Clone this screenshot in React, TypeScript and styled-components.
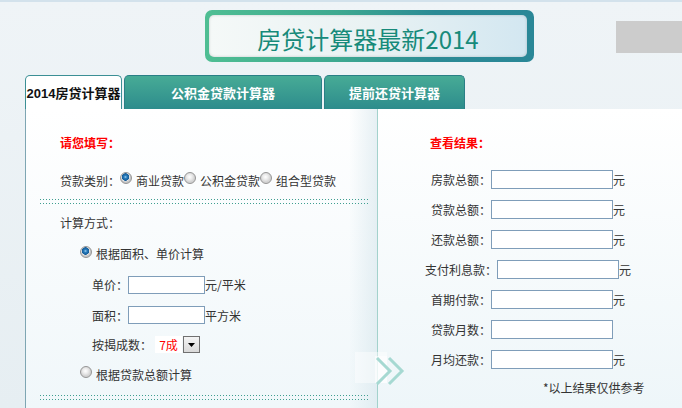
import React from "react";
import styled, { createGlobalStyle, css } from "styled-components";

const GlobalStyle = createGlobalStyle`
  html, body { margin: 0; padding: 0; }
  body {
    background: #e9f0f4;
    font-family: "Noto Sans CJK SC", "Liberation Sans", sans-serif;
  }
`;

const Page = styled.div`
  width: 682px;
  height: 408px;
  overflow: hidden;
  position: relative;
  box-sizing: border-box;
  border-top: 2px solid #d3e2ec;
  background: linear-gradient(to bottom, #eff4f7 0%, #e6eef2 100%);
`;

const Header = styled.header`
  display: flex;
  align-items: flex-start;
  height: 73px;
  box-sizing: border-box;
  padding: 8px 0 0 205px;
`;

const Banner = styled.div`
  width: 329px;
  height: 52px;
  box-sizing: border-box;
  padding: 5px 7px 5px 4px;
  border-radius: 7px;
  background: linear-gradient(to right, #4fbe93 0%, #3ea990 40%, #2b8a95 70%, #2a8797 100%);
`;

const BannerInner = styled.div`
  height: 100%;
  box-sizing: border-box;
  border-radius: 5px;
  background: linear-gradient(to right, #f5f9f8 0%, #e9f2f3 50%, #d3e7f1 100%);
  box-shadow: inset 0 0 3px rgba(0, 0, 0, 0.18);
  display: flex;
  align-items: center;
  justify-content: center;
  padding-top: 4px;
  font-size: 24px;
  color: #178a7a;
`;

const GreyBlock = styled.div`
  margin-left: auto;
  margin-top: 11px;
  width: 66px;
  height: 32px;
  background: #cccccc;
`;

const TabBar = styled.nav`
  display: flex;
  gap: 2px;
  padding-left: 25px;
  height: 34px;
`;

const Tab = styled.div<{ $active?: boolean; $w: number }>`
  width: ${(p) => p.$w}px;
  height: 34px;
  box-sizing: border-box;
  border-radius: 5px 5px 0 0;
  display: flex;
  align-items: center;
  justify-content: center;
  font: bold 13px "Liberation Sans", "Noto Sans CJK SC", sans-serif;
  white-space: nowrap;
  ${(p) =>
    p.$active
      ? css`
          background: #ffffff;
          color: #111;
          border: 1px solid #3b8f95;
          border-bottom: none;
        `
      : css`
          background: linear-gradient(to bottom, #47ab96 0%, #2d8c8c 100%);
          color: #ffffff;
          border: 1px solid #2a7f86;
          border-bottom: none;
        `}
`;

const Panel = styled.main`
  position: relative;
  display: flex;
  margin-left: 25px;
  height: 299px;
  border-left: 1px solid #7ea6b3;
`;

const LeftPane = styled.section`
  width: 351px;
  box-sizing: border-box;
  padding: 24px 7px 0 14px;
  background:
    linear-gradient(to right, rgba(255, 255, 255, 0) 92%, rgba(214, 230, 236, 0.6) 100%),
    linear-gradient(to bottom, #ffffff 0%, #f0f7fa 100%);
  font-size: 12px;
  color: #333;
`;

const VLine = styled.div`
  width: 1px;
  background: #a3d2cc;
`;

const RightPane = styled.section`
  flex: 1;
  box-sizing: border-box;
  padding-top: 24px;
  background: linear-gradient(to bottom, #ffffff 0%, #eef6f9 100%);
  font-size: 12px;
  color: #333;
`;

const RightContent = styled.div`
  width: 300px;
  display: flex;
  flex-direction: column;
`;

const Heading = styled.h3<{ $indent: number }>`
  margin: 0;
  padding-left: ${(p) => p.$indent}px;
  height: 20px;
  line-height: 20px;
  font-size: 12px;
  font-weight: bold;
  color: #ff0000;
`;

const Row = styled.div<{ $indent?: number; $h?: number; $mt?: number }>`
  display: flex;
  align-items: center;
  height: ${(p) => p.$h ?? 30}px;
  margin-top: ${(p) => p.$mt ?? 0}px;
  padding-left: ${(p) => p.$indent ?? 0}px;
  white-space: nowrap;
`;

const Dotted = styled.div<{ $mt: number }>`
  margin-top: ${(p) => p.$mt}px;
  height: 5px;
  background-image:
    repeating-linear-gradient(to right, #3f9e90 0 1px, transparent 1px 3px),
    repeating-linear-gradient(to right, #3f9e90 0 1px, transparent 1px 3px);
  background-size: 100% 1px, 100% 1px;
  background-position: 0 0, 0 4px;
  background-repeat: no-repeat;
`;

const Radio = styled.span<{ $checked?: boolean }>`
  display: inline-block;
  width: 12px;
  height: 12px;
  box-sizing: border-box;
  border-radius: 50%;
  border: 1px solid #959595;
  margin-right: 4px;
  margin-top: -4px;
  flex: none;
  background: ${(p) =>
    p.$checked
      ? "radial-gradient(circle at 45% 40%, #9fd3f2 0, #2a7cbc 1.5px, #135c99 3.5px, #e4e4e4 4px, #c6c6c6 5px)"
      : "radial-gradient(circle at 45% 40%, #ffffff 0, #ececec 2.5px, #d2d2d2 5px)"};
`;

const Label = styled.span``;

const Input = styled.span<{ $w: number; $h: number }>`
  display: inline-block;
  width: ${(p) => p.$w}px;
  height: ${(p) => p.$h}px;
  box-sizing: border-box;
  border: 1px solid #7f9db9;
  background: #ffffff;
  flex: none;
`;

const Unit = styled.span<{ $hidden?: boolean }>`
  visibility: ${(p) => (p.$hidden ? "hidden" : "visible")};
`;

const RatioValue = styled.span`
  display: inline-flex;
  align-items: center;
  justify-content: center;
  width: 27px;
  height: 17px;
  margin-left: 3px;
  background: #ffffff;
  color: #ff0000;
  font-size: 12px;
`;

const DropButton = styled.span`
  display: inline-flex;
  align-items: center;
  justify-content: center;
  width: 17px;
  height: 17px;
  box-sizing: border-box;
  margin-left: 1px;
  border: 1px solid #707070;
  background: linear-gradient(to bottom, #f4f4f4, #d9d9d9);
`;

const ResultRow = styled.div`
  display: flex;
  align-items: center;
  justify-content: center;
  height: 30px;
  white-space: nowrap;
`;

const Spacer = styled.div<{ $h: number }>`
  height: ${(p) => p.$h}px;
`;

const Note = styled.div`
  margin-top: 4px;
  height: 20px;
  line-height: 20px;
  padding-left: 165px;
  white-space: nowrap;
`;

const ChevronOverlay = styled.svg`
  position: absolute;
  left: 329px;
  top: 243px;
  width: 52px;
  height: 36px;
  pointer-events: none;
`;

const results: { label: string; unit: boolean }[] = [
  { label: "房款总额：", unit: true },
  { label: "贷款总额：", unit: true },
  { label: "还款总额：", unit: true },
  { label: "支付利息款：", unit: true },
  { label: "首期付款：", unit: true },
  { label: "贷款月数：", unit: false },
  { label: "月均还款：", unit: true },
];

export default function App() {
  return (
    <>
      <GlobalStyle />
      <Page>
        <Header>
          <Banner>
            <BannerInner>房贷计算器最新2014</BannerInner>
          </Banner>
          <GreyBlock />
        </Header>
        <TabBar>
          <Tab $active $w={97}>2014房贷计算器</Tab>
          <Tab $w={198}>公积金贷款计算器</Tab>
          <Tab $w={141}>提前还贷计算器</Tab>
        </TabBar>
        <Panel>
          <LeftPane>
            <Heading $indent={20}>请您填写：</Heading>
            <Row $indent={20} $h={20} $mt={17}>
              <Label>贷款类别：</Label>
              <Radio $checked />
              <Label>商业贷款</Label>
              <Radio />
              <Label>公积金贷款</Label>
              <Radio />
              <Label>组合型贷款</Label>
            </Row>
            <Dotted $mt={9} />
            <Row $indent={20} $mt={3} $h={31}>
              <Label>计算方式：</Label>
            </Row>
            <Row $indent={40} $h={31}>
              <Radio $checked />
              <Label>根据面积、单价计算</Label>
            </Row>
            <Row $indent={52} $h={31}>
              <Label>单价：</Label>
              <Input $w={77} $h={18} />
              <Unit>元/平米</Unit>
            </Row>
            <Row $indent={52} $h={30}>
              <Label>面积：</Label>
              <Input $w={77} $h={18} />
              <Unit>平方米</Unit>
            </Row>
            <Row $indent={52} $h={29}>
              <Label>按揭成数：</Label>
              <RatioValue>7成</RatioValue>
              <DropButton>
                <svg width="7" height="4" viewBox="0 0 7 4">
                  <polygon points="0,0 7,0 3.5,4" fill="#000" />
                </svg>
              </DropButton>
            </Row>
            <Row $indent={40} $h={30}>
              <Radio />
              <Label>根据贷款总额计算</Label>
            </Row>
            <Dotted $mt={6} />
          </LeftPane>
          <VLine />
          <RightPane>
            <RightContent>
              <Heading $indent={52}>查看结果：</Heading>
              <Spacer $h={11} />
              {results.map((r) => (
                <ResultRow key={r.label}>
                  <Label>{r.label}</Label>
                  <Input $w={122} $h={19} />
                  <Unit $hidden={!r.unit}>元</Unit>
                </ResultRow>
              ))}
              <Note>*以上结果仅供参考</Note>
            </RightContent>
          </RightPane>
          <ChevronOverlay viewBox="0 0 52 36">
            <rect x="0" y="0" width="32" height="31" fill="rgba(255,255,255,0.45)" />
            <rect x="20" y="4" width="12" height="27" fill="rgba(255,255,255,0.6)" />
            <polyline points="22,6 35,19 22,32" fill="none" stroke="#a6d9d2" strokeWidth="3" />
            <polyline points="34,6 47,19 34,32" fill="none" stroke="#a6d9d2" strokeWidth="3" />
          </ChevronOverlay>
        </Panel>
      </Page>
    </>
  );
}
